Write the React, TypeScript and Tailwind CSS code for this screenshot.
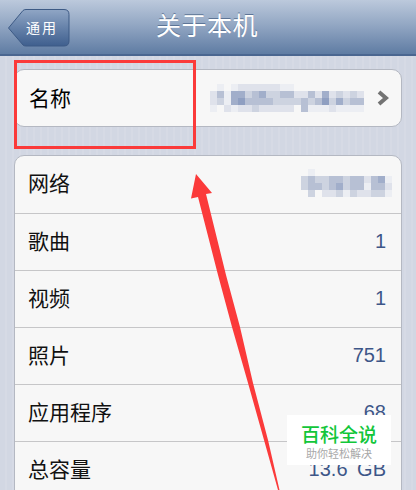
import React from 'react';

const fontStack = 'font-["Liberation_Sans","Noto_Sans_CJK_SC",sans-serif]';

const rows = [
  { label: '网络', mosaic: true },
  { label: '歌曲', value: '1' },
  { label: '视频', value: '1' },
  { label: '照片', value: '751' },
  { label: '应用程序', value: '68' },
  { label: '总容量', value: '13.6 GB' },
];

// pixelated name, each row of the string is one band of blocks
const nameBlocks = [
  '.0.011111100..........',
  '1304423422331131412121',
  '1204533332222323524233',
  '0.1011211111.300010000',
];

const netBlocks = [
  '.0...........',
  '2322332331340',
  '2332342330331',
  '.2.1120211220',
];

const blockColors: Record<string, string> = {
  '0': '#eceef3',
  '1': '#dfe2eb',
  '2': '#cdd3e0',
  '3': '#b7c0d4',
  '4': '#a1aeca',
  '5': '#8f9fc1',
};

function Mosaic({ blocks, size }: { blocks: string[]; size: number }) {
  const w = blocks[0].length * size;
  const h = blocks.length * size;
  return (
    <svg width={w} height={h} className="block">
      {blocks.map((line, y) =>
        line.split('').map((c, x) =>
          c === '.' ? null : (
            <rect key={`${x}-${y}`} x={x * size} y={y * size} width={size} height={size} fill={blockColors[c]} />
          )
        )
      )}
    </svg>
  );
}

export default function App() {
  return (
    <div className={`relative w-[416px] h-[490px] overflow-hidden bg-[#d3d8e3] bg-[repeating-linear-gradient(90deg,#d2d7e3_0px,#d2d7e3_5px,#d6dae5_5px,#d6dae5_7px)] ${fontStack}`}>
      {/* Nav bar */}
      <div className="relative flex items-center justify-center h-[56px] border-b-2 border-[#4a6690] bg-gradient-to-b from-[#bcc9dc] via-[#8fa4c1] to-[#5f7ca3]">
        <div className="absolute left-[8px] top-[9px] w-[62px] h-[38px] flex items-center justify-end pr-[12px]">
          <svg width="62" height="38" viewBox="0 0 62 38" className="absolute inset-0">
            <defs>
              <linearGradient id="backFill" x1="0" y1="0" x2="0" y2="1">
                <stop offset="0" stopColor="#90a6c5" />
                <stop offset="0.5" stopColor="#6682aa" />
                <stop offset="1" stopColor="#3f5f8e" />
              </linearGradient>
            </defs>
            <path
              d="M0.5 19 L15 1.5 Q16 0.5 18 0.5 H56 Q61 0.5 61 5.5 V32 Q61 37 56 37 H18 Q16 37 15 36 Z"
              fill="url(#backFill)"
              stroke="#3d5a85"
            />
          </svg>
          <span className="relative text-[14px] tracking-[2px] text-white">通用</span>
        </div>
        <h1 className="text-[25px] font-normal tracking-[0.5px] text-white -mt-[1px] -ml-[2px] [text-shadow:0_-1px_0_#5d7597]">关于本机</h1>
      </div>

      <div className="px-[14px] pt-[13px]">
        {/* Name card */}
        <div className="flex items-center justify-between h-[58px] rounded-[10px] border border-[#b4b8c2] bg-[#f7f7f7] pl-[14px] pr-[12px]">
          <span className="pt-[2px] text-[21px] text-black">名称</span>
          <div className="flex items-center gap-[13px]">
            <Mosaic blocks={nameBlocks} size={7} />
            <svg width="12" height="16" viewBox="0 0 12 16">
              <path d="M2 2 L9 8 L2 14" fill="none" stroke="#737373" strokeWidth="4" />
            </svg>
          </div>
        </div>

        {/* Details card */}
        <div className="mt-[28px] rounded-t-[10px] border border-[#b4b8c2] bg-[#f7f7f7]">
          {rows.map((row, i) => (
            <div
              key={row.label}
              className={`flex items-center justify-between h-[57px] pl-[13px] pr-[15px] ${i > 0 ? 'border-t border-[#c6c6c8]' : ''}`}
            >
              <span className="pb-[1px] text-[21px] text-[#111]">{row.label}</span>
              {row.mosaic ? (
                <div className="-mr-[6px] -mt-[3px]">
                  <Mosaic blocks={netBlocks} size={7} />
                </div>
              ) : (
                <span className="pb-[2px] text-[20px] text-[#3d5688] [word-spacing:4px]">{row.value}</span>
              )}
            </div>
          ))}
        </div>
      </div>

      {/* Red annotation box */}
      <div className="absolute left-[14px] top-[60px] w-[182px] h-[89px] border-[3px] border-[#fb3a3a]" />

      {/* Red arrow */}
      <svg width="416" height="490" viewBox="0 0 416 490" className="absolute left-0 top-0">
        <path
          d="M196 174 L212 193 L206 194 L226 275 L240 327 L253 383 L268 440 L279.5 490 L278 490 L264 440 L248 383 L232 327 L218 275 L198 197 L191 198.5 Z"
          fill="#fb3a3a"
        />
      </svg>

      {/* Watermark */}
      <div className="absolute left-[287px] top-[415px] w-[104px] h-[50px] bg-white flex flex-col items-center pt-[9px]">
        <span className="text-[19px] leading-[23px] font-medium text-[#12c63a]">百科全说</span>
        <span className="text-[11px] leading-[14px] text-[#a8a8a8]">助你轻松解决</span>
      </div>
    </div>
  );
}
